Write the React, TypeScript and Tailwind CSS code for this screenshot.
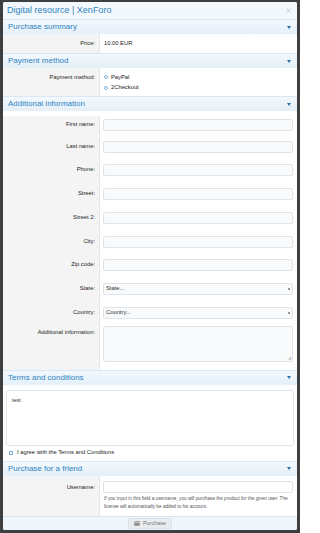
import type { ReactNode } from 'react';

const font = { fontFamily: '"Liberation Sans", Arial, sans-serif' };

function SectionHeader({ title }: { title: string }) {
  return (
    <div className="h-[15px] shrink-0 flex items-center justify-between pl-[5px] pr-[6px] bg-gradient-to-b from-[#f3f9fd] to-[#e4eff8] border-t border-[#dbe8f3]">
      <span className="text-[8px] leading-none text-[#2f83c1]">{title}</span>
      <span className="w-0 h-0 border-l-[2.5px] border-r-[2.5px] border-t-[3px] border-l-transparent border-r-transparent border-t-[#2f6fa8]" />
    </div>
  );
}

function Row({ label, children, height, labelTop }: { label: string; children: ReactNode; height: string; labelTop?: string }) {
  return (
    <div className={`flex ${height}`}>
      <div className={`w-[97px] shrink-0 bg-[#f4f4f4] border-r border-[#e6e6e6] pr-[4px] flex justify-end ${labelTop ? `items-start ${labelTop}` : 'items-center'}`}>
        <span className="text-[5.8px] leading-none text-[#222]">{label}</span>
      </div>
      <div className={`flex-1 pl-[3px] pr-[4px] flex flex-col ${labelTop ? 'justify-start' : 'justify-center'}`}>{children}</div>
    </div>
  );
}

function TextField() {
  return <div className="h-[12px] rounded-[2px] border border-[#dfe4e8] bg-[#f8fafc]" />;
}

function SelectField({ text }: { text: string }) {
  return (
    <div className="h-[12px] rounded-[2px] border border-[#dfe4e8] bg-[#f8fafc] flex items-center justify-between px-[2px]">
      <span className="text-[5.8px] leading-none text-[#333]">{text}</span>
      <span className="flex flex-col gap-[0.5px]">
        <span className="w-0 h-0 border-l-[1.2px] border-r-[1.2px] border-b-[1.5px] border-l-transparent border-r-transparent border-b-[#333]" />
        <span className="w-0 h-0 border-l-[1.2px] border-r-[1.2px] border-t-[1.5px] border-l-transparent border-r-transparent border-t-[#333]" />
      </span>
    </div>
  );
}

function Radio({ label }: { label: string }) {
  return (
    <div className="flex items-center gap-[3px]">
      <span className="w-[4px] h-[4px] rounded-full border border-[#7fb2d6] bg-white" />
      <span className="text-[5.8px] leading-none text-[#222]">{label}</span>
    </div>
  );
}

const fields = ['Phone:', 'Street:', 'Street 2:', 'City:', 'Zip code:'];

export default function App() {
  return (
    <div style={font} className="w-[300px] h-[533px] overflow-hidden bg-[#3e3f41] pl-[3px] pr-[3px] pt-[2px] pb-[3px]">
      <div className="h-full flex flex-col bg-white rounded-[2px] overflow-hidden">
        <div className="h-[17px] shrink-0 flex items-center justify-between pl-[4px] pr-[6px] bg-[#f3f8fc]">
          <span className="text-[9px] leading-none text-[#2f83c1]">Digital resource | XenForo</span>
          <svg width="5" height="5" viewBox="0 0 10 10" className="text-[#a9b4be]">
            <path d="M1 1 L9 9 M9 1 L1 9" stroke="currentColor" strokeWidth="1.4" />
          </svg>
        </div>

        <SectionHeader title="Purchase summary" />
        <Row label="Price:" height="h-[19px]">
          <span className="pl-[1px] text-[5.8px] leading-none text-[#222]">10.00 EUR</span>
        </Row>

        <SectionHeader title="Payment method" />
        <Row label="Payment method:" height="h-[28px]" labelTop="pt-[7px]">
          <div className="flex flex-col gap-[5px] pt-[6.5px] pl-[1px]">
            <Radio label="PayPal" />
            <Radio label="2Checkout" />
          </div>
        </Row>

        <SectionHeader title="Additional information" />
        <div className="flex flex-col">
          <Row label="First name:" height="h-[23.75px] pt-[5px]">
            <TextField />
          </Row>
          <Row label="Last name:" height="h-[23.75px]">
            <TextField />
          </Row>
          {fields.map((f) => (
            <Row key={f} label={f} height="h-[23.75px]">
              <TextField />
            </Row>
          ))}
          <Row label="State:" height="h-[23.75px]">
            <SelectField text="State..." />
          </Row>
          <Row label="Country:" height="h-[23.75px]">
            <SelectField text="Country..." />
          </Row>
          <Row label="Additional information:" height="h-[45px]" labelTop="pt-[5px]">
            <div className="mt-[1px] h-[36px] rounded-[2px] border border-[#dfe4e8] bg-[#f8fafc] relative">
              <span className="absolute right-[1px] bottom-[1px] text-[4px] leading-none text-[#bbb]">◢</span>
            </div>
          </Row>
        </div>

        <SectionHeader title="Terms and conditions" />
        <div className="px-[3px] pt-[5px] pb-[5px]">
          <div className="h-[56px] border border-[#e2e6ea] rounded-[2px] bg-white px-[5px] pt-[7px] text-[5.5px] leading-none text-[#333]">
            test
          </div>
          <div className="flex items-center gap-[4px] pt-[4px] pl-[3px]">
            <span className="w-[4px] h-[4px] border border-[#7fb2d6] bg-white" />
            <span className="text-[5.8px] leading-none text-[#222]">I agree with the Terms and Conditions</span>
          </div>
        </div>

        <SectionHeader title="Purchase for a friend" />
        <Row label="Username:" height="h-[40px]" labelTop="pt-[9px]">
          <div className="mt-[5px] h-[12px] rounded-[2px] border border-[#dfe4e8] bg-white" />
          <p className="pt-[2px] pl-[1px] text-[4.7px] leading-[8px] text-[#555]">
            If you input in this field a username, you will purchase the product for the given user. The license will automatically be added to his account.
          </p>
        </Row>

        <div className="flex-1 flex items-center justify-center bg-[#eef5fb] border-t border-[#d8e4ee]">
          <div className="h-[11px] px-[5px] flex items-center gap-[3px] rounded-[2px] bg-[#e9ecef] border border-[#dde2e6]">
            <svg width="6" height="5" viewBox="0 0 12 10">
              <rect x="0.5" y="0.5" width="11" height="9" rx="1" fill="#888" />
              <rect x="0.5" y="2.5" width="11" height="1.6" fill="#ddd" />
            </svg>
            <span className="text-[5.5px] leading-none text-[#777]">Purchase</span>
          </div>
        </div>
      </div>
    </div>
  );
}
